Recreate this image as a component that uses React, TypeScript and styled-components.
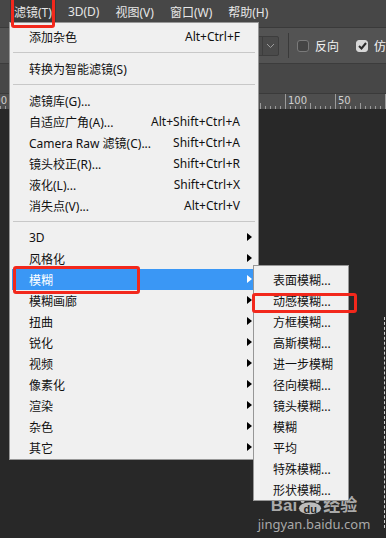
import styled, { createGlobalStyle } from "styled-components";

const GlobalStyle = createGlobalStyle`
  html, body {
    margin: 0;
    padding: 0;
    background: #282828;
  }
  * {
    box-sizing: border-box;
  }
`;

const topMenus = [
  { label: "滤镜(T)", active: true },
  { label: "3D(D)" },
  { label: "视图(V)" },
  { label: "窗口(W)" },
  { label: "帮助(H)" },
];

type MenuEntry =
  | { sep: true }
  | { label: string; shortcut?: string; sub?: boolean; hover?: boolean };

const filterMenu: MenuEntry[] = [
  { label: "添加杂色", shortcut: "Alt+Ctrl+F" },
  { sep: true },
  { label: "转换为智能滤镜(S)" },
  { sep: true },
  { label: "滤镜库(G)..." },
  { label: "自适应广角(A)...", shortcut: "Alt+Shift+Ctrl+A" },
  { label: "Camera Raw 滤镜(C)...", shortcut: "Shift+Ctrl+A" },
  { label: "镜头校正(R)...", shortcut: "Shift+Ctrl+R" },
  { label: "液化(L)...", shortcut: "Shift+Ctrl+X" },
  { label: "消失点(V)...", shortcut: "Alt+Ctrl+V" },
  { sep: true },
  { label: "3D", sub: true },
  { label: "风格化", sub: true },
  { label: "模糊", sub: true, hover: true },
  { label: "模糊画廊", sub: true },
  { label: "扭曲", sub: true },
  { label: "锐化", sub: true },
  { label: "视频", sub: true },
  { label: "像素化", sub: true },
  { label: "渲染", sub: true },
  { label: "杂色", sub: true },
  { label: "其它", sub: true },
];

const blurMenu = [
  "表面模糊...",
  "动感模糊...",
  "方框模糊...",
  "高斯模糊...",
  "进一步模糊",
  "径向模糊...",
  "镜头模糊...",
  "模糊",
  "平均",
  "特殊模糊...",
  "形状模糊...",
];

// ruler: major ticks every 50px; only the labels not hidden by the menu are drawn
const majors = [-15, 35, 85, 135, 185, 235, 285, 335, 385];
const shownLabels = [-15, 285, 335];

function Ruler() {
  const ticks: JSX.Element[] = [];
  majors.forEach((x, i) => {
    ticks.push(<line key={`m${i}`} x1={x + 0.5} y1={0} x2={x + 0.5} y2={15} stroke="#9a9a9a" />);
    if (shownLabels.includes(x)) {
      ticks.push(
        <text key={`t${i}`} x={x + 3} y={10} fontSize="10" fill="#d0d0d0" fontFamily="'DejaVu Sans', sans-serif">
          {String(385 - x)}
        </text>
      );
    }
    for (let k = 1; k < 10; k++) {
      const tx = x + k * 5 + 0.5;
      const h = k === 5 ? 6 : 3;
      ticks.push(<line key={`s${i}-${k}`} x1={tx} y1={15 - h} x2={tx} y2={15} stroke="#9a9a9a" />);
    }
  });
  return (
    <RulerBar>
      <svg width="386" height="15">{ticks}</svg>
    </RulerBar>
  );
}

function BaiduMark() {
  return (
    <Watermark>
      <Brand>
        <span>Bai</span>
        <Paw>
          <svg width="24" height="19" viewBox="0 0 26 20">
            <circle cx="5" cy="5" r="2.2" fill="#d8d8d8" />
            <circle cx="10" cy="2.5" r="2.2" fill="#d8d8d8" />
            <circle cx="16" cy="2.5" r="2.2" fill="#d8d8d8" />
            <circle cx="21" cy="5" r="2.2" fill="#d8d8d8" />
            <ellipse cx="13" cy="13" rx="12" ry="6.5" fill="#d8d8d8" />
          </svg>
          <PawText>du</PawText>
        </Paw>
        <span>经验</span>
      </Brand>
      <Site>jingyan.baidu.com</Site>
    </Watermark>
  );
}

export default function App() {
  return (
    <>
      <GlobalStyle />
      <Screen>
        <MenuBar>
          {topMenus.map((m) => (
            <TopItem key={m.label} $active={!!m.active}>
              {m.label}
            </TopItem>
          ))}
        </MenuBar>

        <OptionsBar>
          <Select>
            <Chevron>
              <svg width="9" height="6" viewBox="0 0 9 6">
                <path d="M1 1l3.5 3.5L8 1" fill="none" stroke="#9c9c9c" strokeWidth="1" />
              </svg>
            </Chevron>
          </Select>
          <VDivider />
          <Check />
          <OptLabel>反向</OptLabel>
          <Check $checked>
            <svg width="9" height="8" viewBox="0 0 9 8">
              <path d="M1 4l2.5 2.5L8 1" fill="none" stroke="#2c2c2c" strokeWidth="2" />
            </svg>
          </Check>
          <OptLabel>仿色</OptLabel>
        </OptionsBar>

        <TabStrip />
        <Ruler />
        <Canvas>
          <SelectionEdge />
          <BaiduMark />
        </Canvas>

        <DropMenu>
          {filterMenu.map((e, i) =>
            "sep" in e ? (
              <Separator key={`sep${i}`} />
            ) : (
              <Row key={e.label} $hover={!!e.hover}>
                <Label>{e.label}</Label>
                {e.shortcut && <Shortcut>{e.shortcut}</Shortcut>}
                {e.sub && <Arrow $hover={!!e.hover} />}
              </Row>
            )
          )}
        </DropMenu>

        <SubMenu>
          {blurMenu.map((s) => (
            <SubRow key={s}>{s}</SubRow>
          ))}
        </SubMenu>

        <Mark style={{ left: 11, top: -3, width: 44, height: 31 }} />
        <Mark style={{ left: 13, top: 266, width: 127, height: 28 }} />
        <Mark style={{ left: 252, top: 293, width: 105, height: 20 }} />
      </Screen>
    </>
  );
}

const Screen = styled.div`
  position: relative;
  width: 386px;
  height: 538px;
  overflow: hidden;
  display: flex;
  flex-direction: column;
  background: #282828;
  font-family: "Noto Sans", "Noto Sans CJK SC", sans-serif;
  font-size: 12px;
`;

const MenuBar = styled.div`
  height: 28px;
  flex: none;
  display: flex;
  align-items: stretch;
  padding-left: 10px;
  gap: 8px;
  background: #474747;
  border-bottom: 1px solid #3a3a3a;
`;

const TopItem = styled.div<{ $active: boolean }>`
  flex: none;
  display: flex;
  align-items: center;
  padding: 0 4px 4px;
  color: #e6e6e6;
  background: ${(p) => (p.$active ? "#3a3a3a" : "transparent")};
`;

const OptionsBar = styled.div`
  height: 36px;
  flex: none;
  display: flex;
  align-items: center;
  padding-left: 250px;
  background: #535353;
  border-bottom: 1px solid #3c3c3c;
  overflow: hidden;
`;

const Select = styled.div`
  flex: none;
  width: 29px;
  height: 20px;
  display: flex;
  justify-content: flex-end;
  border: 1px solid #3d3d3d;
  border-radius: 2px;
  background: #4a4a4a;
`;

const Chevron = styled.div`
  width: 16px;
  display: flex;
  align-items: center;
  justify-content: center;
  border-left: 1px solid #3d3d3d;
`;

const VDivider = styled.div`
  flex: none;
  width: 1px;
  height: 25px;
  margin: 0 8px 0 9px;
  background: #3a3a3a;
`;

const Check = styled.div<{ $checked?: boolean }>`
  flex: none;
  width: 12px;
  height: 12px;
  margin-right: 6px;
  display: flex;
  align-items: center;
  justify-content: center;
  border-radius: 3px;
  border: 1px solid ${(p) => (p.$checked ? "#d8d8d8" : "#7a7a7a")};
  background: ${(p) => (p.$checked ? "#d8d8d8" : "#454545")};
`;

const OptLabel = styled.span`
  flex: none;
  color: #f2f2f2;
  margin-right: 17px;
  white-space: nowrap;
`;

const TabStrip = styled.div`
  height: 30px;
  flex: none;
  background: #474747;
  border-bottom: 1px solid #3a3a3a;
`;

const RulerBar = styled.div`
  height: 15px;
  flex: none;
  background: #4e4e4e;
  svg {
    display: block;
  }
`;

const Canvas = styled.div`
  flex: 1;
  background: #282828;
`;

const SelectionEdge = styled.div`
  position: absolute;
  left: 384px;
  top: 317px;
  width: 2px;
  height: 211px;
  border-left: 1px dashed #d0d0d0;
`;

const Watermark = styled.div`
  position: absolute;
  left: 268px;
  top: 495px;
  width: 92px;
  display: flex;
  flex-direction: column;
  align-items: center;
  color: rgba(222, 222, 222, 0.85);
  opacity: 0.85;
`;

const Brand = styled.div`
  display: flex;
  align-items: center;
  gap: 1px;
  font-family: "Liberation Sans", "Noto Sans CJK SC", sans-serif;
  font-size: 17px;
  font-weight: 700;
  line-height: 21px;
`;

const Paw = styled.div`
  position: relative;
  width: 24px;
  height: 19px;
  svg {
    display: block;
  }
`;

const PawText = styled.span`
  position: absolute;
  left: 0;
  right: 0;
  bottom: 0;
  text-align: center;
  font-size: 11px;
  line-height: 12px;
  color: #282828;
`;

const Site = styled.div`
  font-family: "Noto Sans", sans-serif;
  font-size: 13px;
  line-height: 16px;
`;

const DropMenu = styled.div`
  position: absolute;
  left: 9px;
  top: 22px;
  width: 250px;
  padding: 3px 0 1px;
  background: #f0f0f0;
  border: 1px solid #979797;
  color: #111;
`;

const Separator = styled.div`
  height: 1px;
  margin: 5px 3px 5px 3px;
  background: #c8c8c8;
`;

const Row = styled.div<{ $hover: boolean }>`
  position: relative;
  height: 21px;
  margin-left: 2px;
  padding: 0 18px 0 17px;
  display: flex;
  align-items: center;
  white-space: nowrap;
  background: ${(p) => (p.$hover ? "#3a97f5" : "transparent")};
  color: ${(p) => (p.$hover ? "#fff" : "#111")};
`;

const Label = styled.span`
  flex: 1;
`;

const Shortcut = styled.span``;

const Arrow = styled.span<{ $hover: boolean }>`
  position: absolute;
  right: 6px;
  top: 6px;
  width: 0;
  height: 0;
  border-top: 4.5px solid transparent;
  border-bottom: 4.5px solid transparent;
  border-left: 5px solid ${(p) => (p.$hover ? "#fff" : "#000")};
`;

const SubMenu = styled.div`
  position: absolute;
  left: 253px;
  top: 265px;
  width: 96px;
  padding-top: 3px;
  background: #f0f0f0;
  border: 1px solid #979797;
  color: #111;
`;

const SubRow = styled.div`
  height: 21px;
  padding-left: 19px;
  display: flex;
  align-items: center;
  white-space: nowrap;
`;

const Mark = styled.div`
  position: absolute;
  border: 3px solid #f2281c;
  border-radius: 3px;
`;
